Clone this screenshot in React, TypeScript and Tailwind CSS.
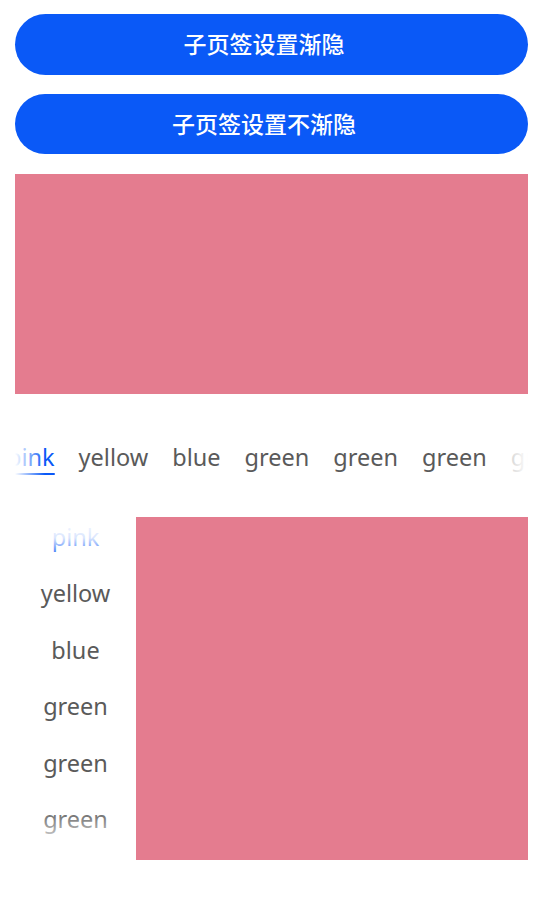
import React from "react";

const font = { fontFamily: '"Noto Sans", "Noto Sans CJK SC", sans-serif' };

export default function App() {
  const hTabs = ["pink", "yellow", "blue", "green", "green", "green", "green"];
  const vTabs = ["pink", "yellow", "blue", "green", "green", "green", "green"];
  return (
    <div className="w-[539px] h-[905px] bg-white flex flex-col pl-[15px] pr-[11px] overflow-hidden" style={font}>
      <button className="mt-[14px] h-[61px] w-full rounded-full bg-[#0a59f7] text-white text-[23px] font-medium flex items-center justify-center pr-[15px]">
        子页签设置渐隐
      </button>
      <button className="mt-[19px] h-[60px] w-full rounded-full bg-[#0a59f7] text-white text-[23px] font-medium flex items-center justify-center pr-[15px]">
        子页签设置不渐隐
      </button>
      <div className="mt-[20px] h-[220px] w-full bg-[#e47c8f] shrink-0" />

      <div className="mt-[40px] h-[48px] w-full relative overflow-hidden shrink-0">
        <div className="flex h-full items-center ml-[-20px]">
          {hTabs.map((t, i) => (
            <div key={i} className="relative px-[12px] h-full flex items-center shrink-0">
              <span className={`text-[23.5px] leading-none ${i === 0 ? "text-[#0a59f7]" : "text-[#5a5a5a]"}`}>{t}</span>
              {i === 0 && (
                <div className="absolute left-[13px] right-[12px] bottom-[7px] h-[2px] bg-[#0a59f7] rounded-full" />
              )}
            </div>
          ))}
        </div>
        <div className="absolute left-0 top-0 h-full w-[30px] bg-gradient-to-r from-white to-transparent" />
        <div className="absolute right-0 top-0 h-full w-[44px] bg-gradient-to-l from-white via-white/70 to-transparent" />
      </div>

      <div className="mt-[35px] h-[343px] w-full flex shrink-0">
        <div className="w-[121px] h-full relative overflow-hidden shrink-0">
          <div className="flex flex-col mt-[-8px]">
            {vTabs.map((t, i) => (
              <div key={i} className="h-[56.5px] flex items-center justify-center shrink-0">
                <span className={`text-[23.5px] leading-none ${i === 0 ? "text-[#0a59f7]" : "text-[#5a5a5a]"}`}>{t}</span>
              </div>
            ))}
          </div>
          <div className="absolute left-0 top-0 w-full h-[42px] bg-gradient-to-b from-white via-white/85 to-transparent" />
          <div className="absolute left-0 bottom-0 w-full h-[52px] bg-gradient-to-t from-white via-white/60 to-transparent" />
        </div>
        <div className="flex-1 h-full bg-[#e47c8f]" />
      </div>
    </div>
  );
}
